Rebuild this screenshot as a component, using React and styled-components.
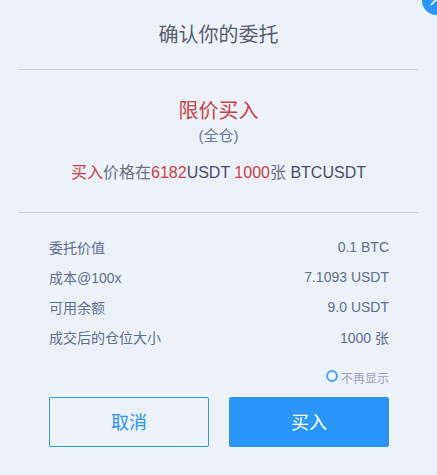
import React from 'react';
import styled, { createGlobalStyle } from 'styled-components';

const GlobalStyle = createGlobalStyle`
  html, body {
    margin: 0;
    padding: 0;
    background: #edf2f9;
  }
  body {
    font-family: "Liberation Sans", "Noto Sans CJK SC", sans-serif;
    overflow: hidden;
  }
`;

const Dialog = styled.div`
  position: relative;
  width: 437px;
  height: 475px;
  box-sizing: border-box;
  background: #edf2f9;
  overflow: hidden;
`;

const CloseBadge = styled.div`
  position: absolute;
  top: -14px;
  right: -14px;
  width: 29px;
  height: 29px;
  border-radius: 50%;
  background: #2b95f8;

  svg {
    display: block;
  }
`;

const Title = styled.h2`
  margin: 0 19px;
  height: 70px;
  box-sizing: border-box;
  padding-top: 23px;
  border-bottom: 1px solid #c5d1e2;
  font-size: 20px;
  line-height: 24px;
  font-weight: 400;
  text-align: center;
  color: #585e6e;
`;

const Summary = styled.section`
  margin: 0 19px;
  height: 143px;
  box-sizing: border-box;
  padding-top: 29px;
  border-bottom: 1px solid #c5d1e2;
  text-align: center;
`;

const OrderType = styled.div`
  font-size: 20px;
  line-height: 24px;
  color: #c9404a;
`;

const Margin = styled.div`
  margin-top: 3px;
  font-size: 15px;
  line-height: 20px;
  color: #66779f;
`;

const Sentence = styled.div`
  margin-top: 17px;
  font-size: 16px;
  line-height: 20px;
  color: #6a7182;
`;

const Red = styled.span`
  color: #c9404a;
`;

const Dark = styled.span`
  color: #454e68;
`;

const Details = styled.section`
  padding: 19px 48px 0 49px;
`;

const Row = styled.div`
  display: flex;
  justify-content: space-between;
  align-items: center;
  height: 30px;
  font-size: 14px;
  color: #5f6d92;
`;

const Hint = styled.label`
  display: flex;
  justify-content: flex-end;
  align-items: center;
  gap: 3px;
  margin-top: 15px;
  height: 20px;
  font-size: 12px;
  color: #98a1b3;
`;

const Radio = styled.span`
  width: 8px;
  height: 8px;
  border: 2px solid #4aa3f7;
  border-radius: 50%;
  margin-top: -3px;
`;

const Actions = styled.div`
  display: grid;
  grid-template-columns: 160px 160px;
  gap: 20px;
  margin-top: 10px;
`;

const Button = styled.button`
  height: 50px;
  box-sizing: border-box;
  border-radius: 2px;
  border: 1px solid #2b95f8;
  background: ${(p) => (p.$primary ? '#2b95f8' : 'transparent')};
  color: ${(p) => (p.$primary ? '#ffffff' : '#2b95f8')};
  font-family: inherit;
  font-size: 18px;
  padding: 0 0 2px;
`;

export default function App() {
  return (
    <Dialog>
      <GlobalStyle />
      <CloseBadge>
        <svg width="29" height="29" viewBox="0 0 29 29">
          <path d="M9 19 L20 8" stroke="#fff" strokeWidth="1.6" />
        </svg>
      </CloseBadge>
      <Title>确认你的委托</Title>
      <Summary>
        <OrderType>限价买入</OrderType>
        <Margin>(全仓)</Margin>
        <Sentence>
          <Red>买入</Red>价格在<Red>6182</Red>
          <Dark>USDT </Dark>
          <Red>1000</Red>张<Dark> BTCUSDT</Dark>
        </Sentence>
      </Summary>
      <Details>
        <Row>
          <span>委托价值</span>
          <span>0.1 BTC</span>
        </Row>
        <Row>
          <span>成本@100x</span>
          <span>7.1093 USDT</span>
        </Row>
        <Row>
          <span>可用余额</span>
          <span>9.0 USDT</span>
        </Row>
        <Row>
          <span>成交后的仓位大小</span>
          <span>1000 张</span>
        </Row>
        <Hint>
          <Radio />
          不再显示
        </Hint>
        <Actions>
          <Button>取消</Button>
          <Button $primary>买入</Button>
        </Actions>
      </Details>
    </Dialog>
  );
}
